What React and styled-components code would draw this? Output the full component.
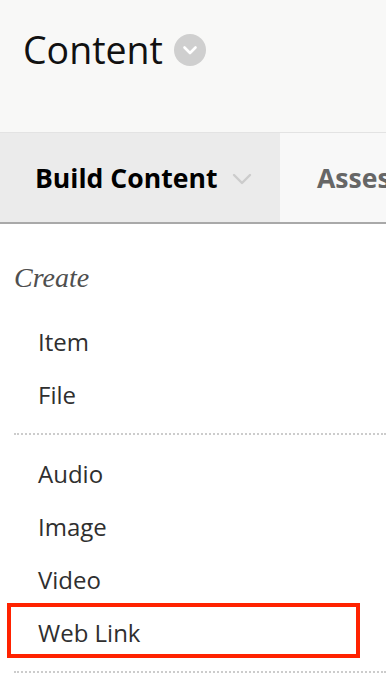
import styled, { createGlobalStyle } from 'styled-components';

const GlobalStyle = createGlobalStyle`
  html, body {
    margin: 0;
    padding: 0;
    background: #fff;
  }
  body {
    font-family: "Open Sans", "Noto Sans", sans-serif;
    overflow: hidden;
  }
`;

const createItems = ['Item', 'File'];
const mediaItems = ['Audio', 'Image', 'Video', 'Web Link'];

function CircleChevron() {
  return (
    <svg width="32" height="32" viewBox="0 0 32 32" aria-hidden="true">
      <circle cx="16" cy="16" r="16" fill="#cfcfcf" />
      <path
        d="M10.5 13.5 L16 19 L21.5 13.5"
        fill="none"
        stroke="#fff"
        strokeWidth="2.6"
        strokeLinecap="round"
        strokeLinejoin="round"
      />
    </svg>
  );
}

function SmallChevron() {
  return (
    <svg width="20" height="12" viewBox="0 0 20 12" aria-hidden="true">
      <path
        d="M2 2 L10 10 L18 2"
        fill="none"
        stroke="#cccccc"
        strokeWidth="2.4"
        strokeLinecap="round"
        strokeLinejoin="round"
      />
    </svg>
  );
}

export default function App() {
  return (
    <Page>
      <GlobalStyle />
      <Header>
        <Title>Content</Title>
        <CircleChevron />
      </Header>

      <TabBar>
        <Tab active>
          <TabLabel active>Build Content</TabLabel>
          <SmallChevron />
        </Tab>
        <Tab>
          <TabLabel>Assessments</TabLabel>
        </Tab>
      </TabBar>

      <Menu>
        <Heading>Create</Heading>
        <List>
          {createItems.map((label) => (
            <MenuItem key={label}>{label}</MenuItem>
          ))}
        </List>
        <Divider />
        <List>
          {mediaItems.map((label) => (
            <MenuItem key={label} highlighted={label === 'Web Link'}>
              {label}
            </MenuItem>
          ))}
        </List>
        <Divider />
      </Menu>
    </Page>
  );
}

const Page = styled.div`
  width: 386px;
  height: 698px;
  overflow: hidden;
  background: #fff;
`;

const Header = styled.header`
  height: 132px;
  box-sizing: border-box;
  padding: 31px 0 0 23px;
  background: #f8f8f7;
  display: flex;
  align-items: flex-start;
  gap: 11px;

  svg {
    margin-top: 3px;
  }
`;

const Title = styled.h1`
  margin: 0;
  font-size: 37.5px;
  line-height: 37px;
  font-weight: 400;
  color: #111;
`;

const TabBar = styled.nav`
  display: flex;
  height: 89px;
  border-top: 1px solid #e3e3e3;
  border-bottom: 2px solid #a9a9a9;
  background: #f8f8f8;
  white-space: nowrap;
`;

const Tab = styled.div`
  display: flex;
  align-items: center;
  gap: 15px;
  flex: 0 0 auto;
  width: ${(p) => (p.active ? '280px' : 'auto')};
  box-sizing: border-box;
  padding-left: ${(p) => (p.active ? '35px' : '37px')};
  background: ${(p) => (p.active ? '#ebebeb' : '#f8f8f8')};

  svg {
    margin-top: 2px;
  }
`;

const TabLabel = styled.span`
  font-size: 26.6px;
  font-weight: 700;
  color: ${(p) => (p.active ? '#000' : '#666')};
`;

const Menu = styled.div`
  padding: 40px 0 0 14px;
`;

const Heading = styled.h2`
  margin: 0 0 24px;
  font-family: "Liberation Serif", "DejaVu Serif", serif;
  font-style: italic;
  font-weight: 400;
  font-size: 28px;
  line-height: 27px;
  color: #4f4f4f;
`;

const List = styled.ul`
  list-style: none;
  margin: 0;
  padding: 0;
`;

const MenuItem = styled.li`
  position: relative;
  height: 53px;
  line-height: 53px;
  padding-left: 24px;
  font-size: 24px;
  color: #2f2f2f;

  ${(p) =>
    p.highlighted &&
    `
    &::after {
      content: '';
      position: absolute;
      left: -7px;
      top: -3px;
      width: 353px;
      height: 55px;
      box-sizing: border-box;
      border: 4.5px solid #ff2200;
    }
  `}
`;

const Divider = styled.hr`
  margin: 12px 0;
  border: 0;
  border-top: 2px dotted #cccccc;
  height: 0;
`;
